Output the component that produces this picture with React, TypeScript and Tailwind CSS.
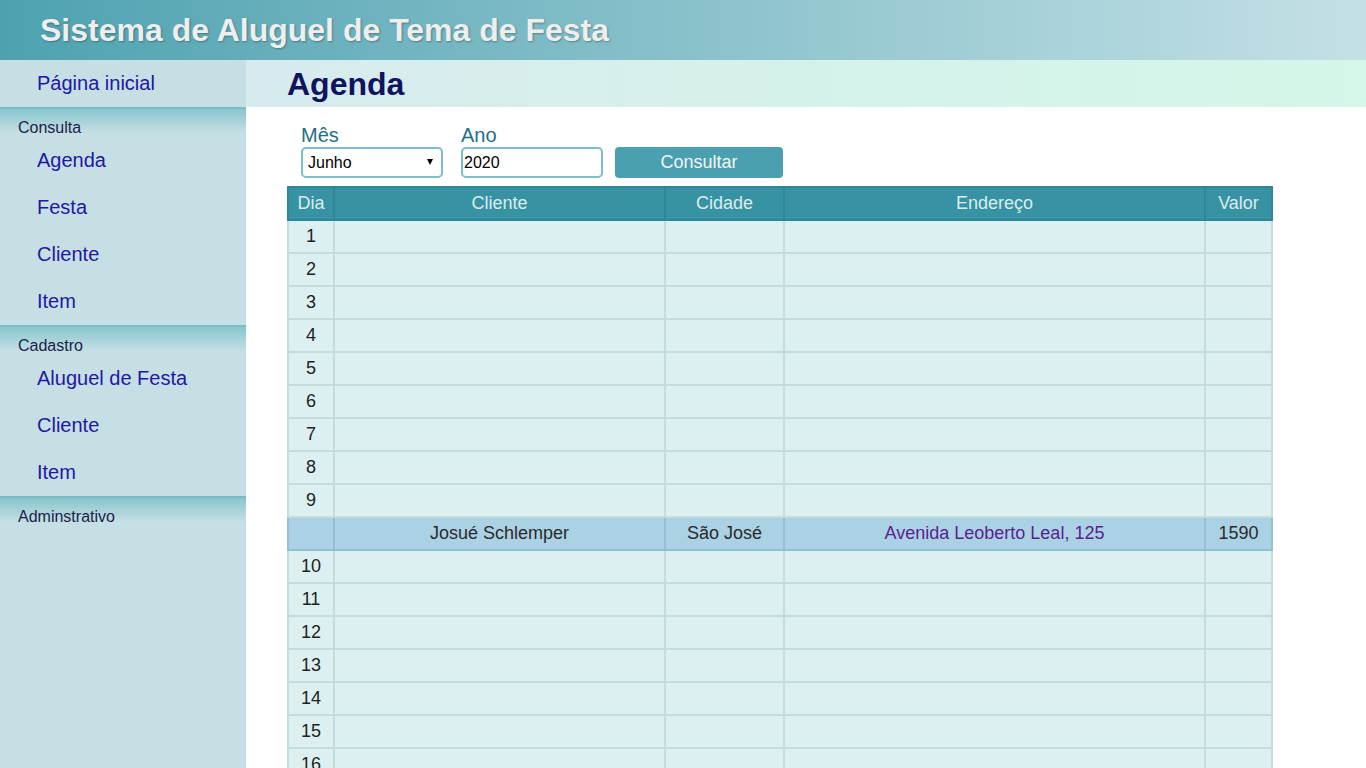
import React from 'react';

const font = { fontFamily: '"Liberation Sans", Arial, sans-serif' };

const menu = [
  { titulo: 'Consulta', itens: ['Agenda', 'Festa', 'Cliente', 'Item'] },
  { titulo: 'Cadastro', itens: ['Aluguel de Festa', 'Cliente', 'Item'] },
  { titulo: 'Adminstrativo', itens: [] as string[] },
];

const dias = Array.from({ length: 30 }, (_, i) => i + 1);

function Sidebar() {
  return (
    <aside className="w-[246px] shrink-0 bg-[#c5dfe4]">
      <a href="#" className="block h-[47px] pl-[37px] pt-[8px] text-[20px] text-[#2317a5]">
        Página inicial
      </a>
      {menu.map((sec) => (
        <div key={sec.titulo}>
          <div className="h-[30px] border-t-2 border-[#79bcc5] bg-[linear-gradient(to_bottom,#88c6ce,#c5dfe4_24px)] pl-[18px] pt-[10px] text-[16px] leading-[18px] text-[#1d1d4a]">
            {sec.titulo}
          </div>
          {sec.itens.map((item) => (
            <a key={item} href="#" className="flex h-[47px] items-center pb-[2px] pl-[37px] text-[20px] text-[#2317a5]">
              {item}
            </a>
          ))}
        </div>
      ))}
    </aside>
  );
}

function Filtro() {
  return (
    <div className="flex items-end gap-[18px] pl-[55px] pt-[16px]">
      <label className="flex flex-col">
        <span className="text-[20px] leading-[24px] text-[#1e6f86]">Mês</span>
        <div className="relative">
          <select
            defaultValue="Junho"
            className="h-[31px] w-[142px] appearance-none rounded-[5px] border-2 border-[#7bbfc8] bg-white pl-[5px] text-[16px] text-black outline-none"
          >
            {['Janeiro', 'Fevereiro', 'Março', 'Abril', 'Maio', 'Junho', 'Julho', 'Agosto', 'Setembro', 'Outubro', 'Novembro', 'Dezembro'].map((m) => (
              <option key={m}>{m}</option>
            ))}
          </select>
          <span className="pointer-events-none absolute right-[10px] top-[12px] h-0 w-0 border-x-[3px] border-t-[6px] border-x-transparent border-t-black" />
        </div>
      </label>
      <label className="flex flex-col">
        <span className="text-[20px] leading-[24px] text-[#1e6f86]">Ano</span>
        <input
          defaultValue="2020"
          className="h-[31px] w-[142px] rounded-[5px] border-2 border-[#7bbfc8] bg-white pl-[1px] text-[16px] text-black outline-none"
        />
      </label>
      <button className="ml-[-6px] h-[31px] w-[168px] rounded-[4px] bg-[#4aa0ae] text-[18px] text-[#f2f6f7]">
        Consultar
      </button>
    </div>
  );
}

function Agenda() {
  const cell = 'border-2 border-[#c4dcdc] h-[33px] p-0 text-center';
  const ev = 'border-2 border-[#93bfd1] h-[33px] p-0 text-center';
  return (
    <table className="ml-[41px] mt-[8px] table-fixed border-collapse border border-[#dddddd] text-[18px]">
      <colgroup>
        <col className="w-[46px]" />
        <col className="w-[331px]" />
        <col className="w-[119px]" />
        <col className="w-[421px]" />
        <col className="w-[67px]" />
      </colgroup>
      <thead>
        <tr className="bg-[#3793a3] text-[#dcecee]">
          {['Dia', 'Cliente', 'Cidade', 'Endereço', 'Valor'].map((h) => (
            <th key={h} className="h-[33px] border-2 border-[#2f8796] p-0 font-normal">
              {h}
            </th>
          ))}
        </tr>
      </thead>
      <tbody className="text-[#222]">
        {dias.map((d) => (
          <React.Fragment key={d}>
            <tr className="bg-[#dcf0f1]">
              <td className={cell}>{d}</td>
              <td className={cell}></td>
              <td className={cell}></td>
              <td className={cell}></td>
              <td className={cell}></td>
            </tr>
            {d === 9 && (
              <tr className="bg-[#abd2e4] text-[#2a2a2a]">
                <td className={ev}></td>
                <td className={ev}>Josué Schlemper</td>
                <td className={ev}>São José</td>
                <td className={ev}>
                  <a href="#" className="text-[#5a1f8f]">Avenida Leoberto Leal, 125</a>
                </td>
                <td className={ev}>1590</td>
              </tr>
            )}
          </React.Fragment>
        ))}
      </tbody>
    </table>
  );
}

export default function App() {
  return (
    <div className="w-screen bg-white" style={font}>
      <header className="flex h-[60px] items-center bg-[linear-gradient(to_right,#4ea2b0,#c4e0e6)] pl-[40px]">
        <h1 className="text-[32px] font-bold text-[#eeeeee] [text-shadow:1px_1px_2px_rgba(0,0,0,0.3)]">
          Sistema de Aluguel de Tema de Festa
        </h1>
      </header>
      <div className="flex">
        <Sidebar />
        <main className="flex-1 pb-[40px]">
          <div className="flex h-[47px] items-center bg-[linear-gradient(to_right,#d7ebee,#d4f7e8)] pl-[41px]">
            <h2 className="text-[32px] font-bold text-[#10145f]">Agenda</h2>
          </div>
          <Filtro />
          <Agenda />
        </main>
      </div>
    </div>
  );
}
